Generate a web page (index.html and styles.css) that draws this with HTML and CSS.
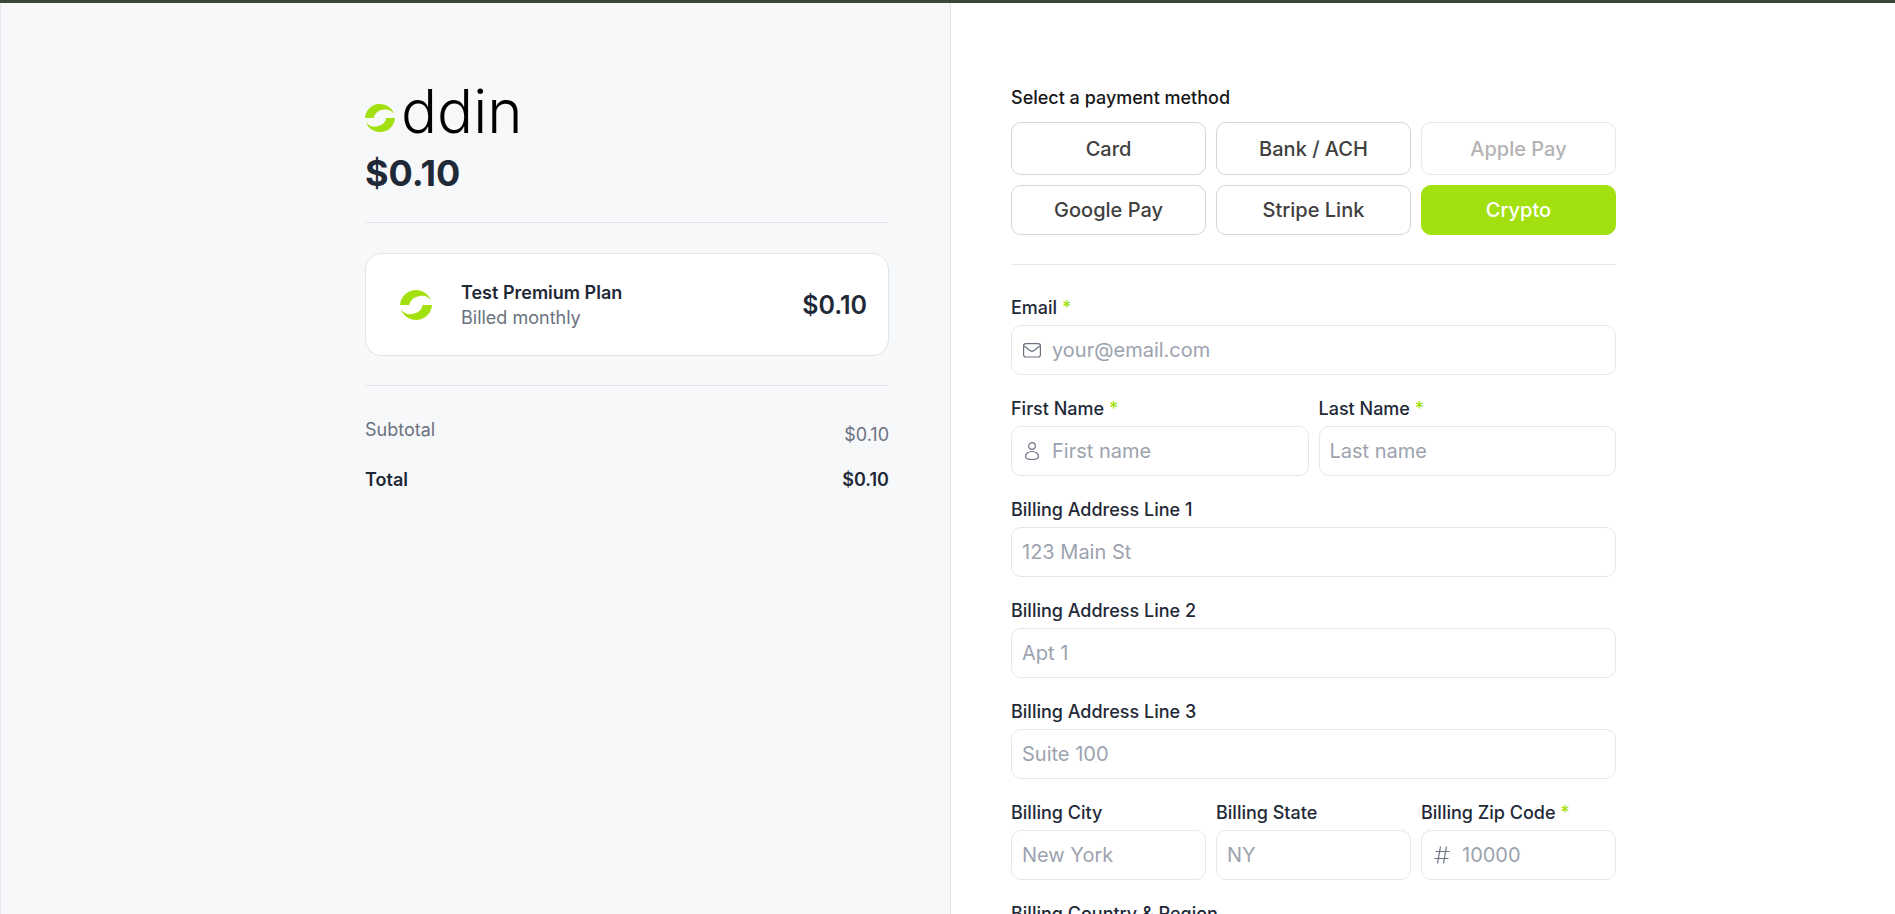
FILE: index.html
```html
<!DOCTYPE html>
<html lang="en">
<head>
<meta charset="utf-8">
<meta name="viewport" content="width=device-width, initial-scale=1">
<title>oddin checkout</title>
<link rel="stylesheet" href="styles.css">
</head>
<body>
<svg class="defs" aria-hidden="true">
  <symbol id="mark" viewBox="0 0 32 32">
    <path d="M0 16A16 16 0 0 1 31 11.500C28 7.500 24 6.300 20 7C13.500 8 10 11.500 9.500 16Z"/>
    <path d="M32 16A16 16 0 0 1 1 20.500C4 24.500 8 25.700 12 25C18.500 24 22 20.500 22.500 16Z"/>
  </symbol>
</svg>
<div class="page">
  <section class="summary" aria-label="Order summary">
    <div class="summary-inner">
      <div class="logo"><svg class="logo-mark" aria-hidden="true"><use href="#mark"/></svg><span class="logo-text">ddin</span></div>
      <h1 class="amount">$0.10</h1>
      <div class="plan">
        <svg class="plan-mark" aria-hidden="true"><use href="#mark"/></svg>
        <div class="plan-info">
          <h2 class="plan-name">Test Premium Plan</h2>
          <p class="plan-cycle">Billed monthly</p>
        </div>
        <span class="plan-price">$0.10</span>
      </div>
      <dl class="totals">
        <div class="total-row subtotal"><dt>Subtotal</dt><dd>$0.10</dd></div>
        <div class="total-row total"><dt>Total</dt><dd>$0.10</dd></div>
      </dl>
    </div>
  </section>
  <main class="checkout">
    <form class="form">
      <h2 class="methods-title">Select a payment method</h2>
      <div class="methods">
        <button type="button" class="method">Card</button>
        <button type="button" class="method">Bank / ACH</button>
        <button type="button" class="method" disabled>Apple Pay</button>
        <button type="button" class="method">Google Pay</button>
        <button type="button" class="method">Stripe Link</button>
        <button type="button" class="method selected">Crypto</button>
      </div>
      <div class="fields">
        <div class="field wide">
          <label for="email">Email <span class="req">*</span></label>
          <div class="control">
            <svg class="icon" viewBox="0 0 18 18" aria-hidden="true"><rect x=".6" y="2.600" width="16.800" height="13.400" rx="2.200"/><path d="M1 5l6 4.600a3.300 3.300 0 0 0 4 0L17 5"/></svg>
            <input id="email" type="email" placeholder="your@email.com">
          </div>
        </div>
        <div class="field half">
          <label for="first">First Name <span class="req">*</span></label>
          <div class="control">
            <svg class="icon" viewBox="0 0 18 18" aria-hidden="true"><circle cx="9" cy="4" r="3.300"/><path d="M9 9.500c3.800 0 6.500 2.500 6.500 5 0 1.800-2.500 3-6.500 3s-6.500-1.200-6.500-3c0-2.500 2.700-5 6.500-5z"/></svg>
            <input id="first" type="text" placeholder="First name">
          </div>
        </div>
        <div class="field half">
          <label for="last">Last Name <span class="req">*</span></label>
          <div class="control"><input id="last" type="text" placeholder="Last name"></div>
        </div>
        <div class="field wide">
          <label for="line1">Billing Address Line 1</label>
          <div class="control"><input id="line1" type="text" placeholder="123 Main St"></div>
        </div>
        <div class="field wide">
          <label for="line2">Billing Address Line 2</label>
          <div class="control"><input id="line2" type="text" placeholder="Apt 1"></div>
        </div>
        <div class="field wide">
          <label for="line3">Billing Address Line 3</label>
          <div class="control"><input id="line3" type="text" placeholder="Suite 100"></div>
        </div>
        <div class="field third">
          <label for="city">Billing City</label>
          <div class="control"><input id="city" type="text" placeholder="New York"></div>
        </div>
        <div class="field third">
          <label for="state">Billing State</label>
          <div class="control"><input id="state" type="text" placeholder="NY"></div>
        </div>
        <div class="field third">
          <label for="zip">Billing Zip Code <span class="req">*</span></label>
          <div class="control">
            <svg class="icon" viewBox="0 0 18 18" aria-hidden="true"><path d="M7.500 .5L4.500 17.500M13.500 .5l-3 17M2.500 5.500h14M1.500 12.500h14"/></svg>
            <input id="zip" type="text" placeholder="10000">
          </div>
        </div>
        <div class="field wide">
          <label for="country">Billing Country &amp; Region</label>
          <div class="control"><input id="country" type="text"></div>
        </div>
      </div>
    </form>
  </main>
</div>
</body>
</html>
```
FILE: styles.css
```css
* { box-sizing: border-box; }
body {
  margin: 0;
  height: 100vh;
  overflow: hidden;
  border-top: 3px solid #3c4639;
  background: #fff;
  color: #1f2937;
  font-family: Inter, "Liberation Sans", sans-serif;
  font-size: 18px;
  line-height: 24px;
}
h1, h2, p, dl, dd { margin: 0; }
.defs { position: absolute; width: 0; height: 0; }
.page {
  display: grid;
  grid-template-columns: 951fr 944fr;
  height: 100%;
}
.summary {
  display: flex;
  justify-content: flex-end;
  padding: 80px 61px 0;
  border: solid #e5e7eb;
  border-width: 0 1px;
  background: #f7f8fa;
}
.summary-inner { width: 100%; max-width: 524px; }
.logo {
  display: flex;
  align-items: baseline;
  gap: 6px;
  height: 56px;
  line-height: 56px;
}
.logo-mark { width: 30px; height: 30px; fill: #a3e010; }
.logo-text {
  color: #000;
  font-size: 60px;
  font-weight: 300;
}
.amount {
  padding: 8px 0 23px;
  border-bottom: 1px solid #e1e3e6;
  font-size: 36px;
  font-weight: 700;
  line-height: 52px;
}
.plan {
  display: flex;
  align-items: center;
  margin: 30px 0 29px;
  padding: 26px 21px 25px 34px;
  border: 1px solid #e1e5e8;
  border-radius: 16px;
  background: #fff;
}
.plan-mark { width: 32px; height: 34px; margin-right: 29px; fill: #a3e010; }
.plan-info { flex: 1; }
.plan-name { font-size: 18px; font-weight: 600; line-height: 25px; }
.plan-cycle { color: #6b7280; font-size: 18px; line-height: 25px; }
.plan-price { font-size: 25px; font-weight: 600; line-height: 32px; }
.totals { padding-top: 32px; border-top: 1px solid #e1e3e6; }
.total-row { display: flex; justify-content: space-between; }
.subtotal { color: #6b7280; }
.subtotal dd { padding-top: 5px; }
.total { margin-top: 21px; font-weight: 600; }

.checkout { padding: 83px 60px 0; }
.form { width: 100%; max-width: 605px; }
.methods-title { color: #171717; font-size: 18px; font-weight: 500; }
.methods {
  display: grid;
  grid-template-columns: repeat(3, 1fr);
  grid-template-rows: 53px 50px;
  gap: 10px;
  padding: 12px 0 29px;
  border-bottom: 1px solid #e5e7eb;
}
.method {
  border: 1px solid #d1d5db;
  border-radius: 10px;
  background: #fff;
  color: #404040;
  font: 500 20px/28px Inter, sans-serif;
}
.method:disabled { border-color: #e5e7eb; color: #b3b3b3; }
.method.selected { border-color: #a3e010; background: #a3e010; color: #fff; }
.fields {
  display: grid;
  grid-template-columns: repeat(6, 1fr);
  gap: 22px 10px;
  padding-top: 31px;
}
.wide { grid-column: span 6; }
.half { grid-column: span 3; }
.third { grid-column: span 2; }
.field label { display: block; margin-bottom: 5px; font-size: 18px; font-weight: 500; }
.req { color: #a3e010; }
.control {
  display: flex;
  align-items: center;
  gap: 11px;
  height: 50px;
  padding: 0 10px;
  border: 1px solid #e5e7eb;
  border-radius: 10px;
}
.icon {
  flex: none;
  width: 18px;
  height: 18px;
  margin-left: 1px;
  fill: none;
  stroke: #6b7280;
  stroke-width: 1.2;
}
.control input {
  flex: 1;
  min-width: 0;
  padding: 0;
  border: 0;
  outline: 0;
  background: none;
  color: #1f2937;
  font: 400 20px/28px Inter, sans-serif;
}
.control input::placeholder { color: #9ca3af; opacity: 1; }
```
